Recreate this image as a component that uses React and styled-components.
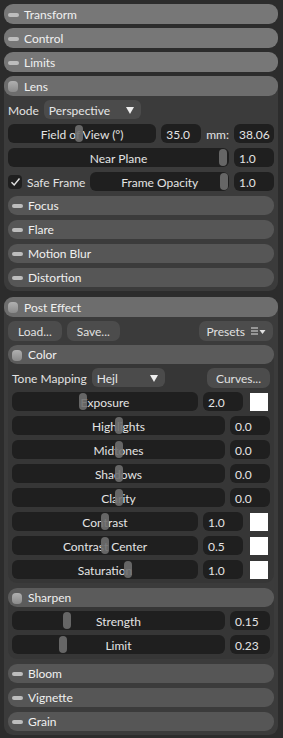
import React from 'react';
import styled, { createGlobalStyle } from 'styled-components';

const GlobalStyle = createGlobalStyle`
  html, body {
    margin: 0;
    padding: 0;
    background: #2c2c2c;
  }
  body {
    font-family: Lato, "Noto Sans", "Liberation Sans", sans-serif;
    font-size: 12px;
    color: #e6e6e6;
  }
`;

const Page = styled.div`
  width: 283px;
  height: 738px;
  box-sizing: border-box;
  padding: 4px 5px 0 4px;
  display: flex;
  flex-direction: column;
  gap: 4px;
  overflow: hidden;
`;

const Header = styled.div`
  height: ${({ $sub }) => ($sub ? 19 : 20)}px;
  box-sizing: border-box;
  padding: 1px 0 0 4px;
  flex-shrink: 0;
  display: flex;
  align-items: center;
  gap: 5px;
  border-radius: 9px;
  background: ${({ $sub, $open }) =>
    $sub ? ($open ? '#5b5b5b' : '#565656') : $open ? '#6d6d6d' : '#777777'};
  color: #f0f0f0;
  line-height: 1;
`;

const Collapsed = styled.span`
  width: 11px;
  height: 4px;
  border-radius: 2px;
  background: #bdbdbd;
`;

const Expanded = styled.span`
  width: 10px;
  height: 11px;
  margin-right: 1px;
  border-radius: 4px;
  background: linear-gradient(#b0b0b0, #8a8a8a);
`;

const Panel = styled.div`
  display: flex;
  flex-direction: column;
  border-radius: 9px;
  background: ${({ $sub }) => ($sub ? '#363636' : '#3b3b3b')};
  flex-shrink: 0;
  margin-top: ${({ $mt }) => $mt || 0}px;
`;

const Body = styled.div`
  display: flex;
  flex-direction: column;
  gap: 5px;
  padding: 4px 4px ${({ $pb }) => $pb || 4}px 4px;
`;

const Row = styled.div`
  height: 19px;
  display: flex;
  align-items: center;
  gap: 5px;
  flex-shrink: 0;
`;

const Label = styled.span`
  color: #e2e2e2;
  white-space: nowrap;
  padding-top: 1px;
`;

const Dropdown = styled.div`
  width: ${({ $w }) => $w}px;
  height: 19px;
  box-sizing: border-box;
  display: flex;
  align-items: center;
  justify-content: space-between;
  padding: 1px 7px 0 5px;
  border-radius: 6px;
  background: #4b4b4b;
  color: #e6e6e6;
  &::after {
    content: '';
    border-left: 4.5px solid transparent;
    border-right: 4.5px solid transparent;
    border-top: 7px solid #eeeeee;
  }
`;

const Button = styled.div`
  height: 20px;
  box-sizing: border-box;
  padding: 1px ${({ $px }) => $px || 9}px 0;
  display: flex;
  align-items: center;
  gap: 6px;
  border-radius: 7px;
  background: #4c4c4c;
  color: #e0e0e0;
  margin-left: ${({ $right }) => ($right ? 'auto' : '0')};
  margin-right: ${({ $mr }) => $mr || 0}px;
`;

const Track = styled.div`
  position: relative;
  flex: 1;
  height: 19px;
  box-sizing: border-box;
  padding-top: 1px;
  border-radius: 6px;
  background: #1f1f1f;
  display: flex;
  align-items: center;
  justify-content: center;
  color: #e4e4e4;
`;

const Thumb = styled.span`
  position: absolute;
  top: 1px;
  width: 8px;
  height: 17px;
  margin-left: -4px;
  border-radius: 4px;
  background: #6e6e6e;
  opacity: 0.9;
`;

const TrackText = styled.span`
  position: relative;
`;

const Value = styled.div`
  width: 40px;
  height: 19px;
  box-sizing: border-box;
  padding: 1px 0 0 5px;
  border-radius: 6px;
  background: #1f1f1f;
  display: flex;
  align-items: center;
  color: #e4e4e4;
  flex-shrink: 0;
`;

const Swatch = styled.div`
  width: 18px;
  height: 18px;
  background: #ffffff;
  margin-left: 2px;
  margin-right: 2px;
  flex-shrink: 0;
`;

const Check = styled.div`
  width: 14px;
  height: 14px;
  border-radius: 4px;
  background: #1f1f1f;
  display: flex;
  align-items: center;
  justify-content: center;
  flex-shrink: 0;
`;

function Head({ title, open, sub }) {
  return (
    <Header $sub={sub} $open={open}>
      {open ? <Expanded /> : <Collapsed />}
      <span>{title}</span>
    </Header>
  );
}

function Slider({ label, pos }) {
  return (
    <Track>
      <TrackText>{label}</TrackText>
      <Thumb style={{ left: `${pos}%` }} />
    </Track>
  );
}

function ColorRow({ label, pos, value, swatch }) {
  return (
    <Row>
      <Slider label={label} pos={pos} />
      <Value>{value}</Value>
      {swatch && <Swatch />}
    </Row>
  );
}

const colorRows = [
  { label: 'Exposure', pos: 38, value: '2.0', swatch: true },
  { label: 'Highlights', pos: 50, value: '0.0' },
  { label: 'Midtones', pos: 50, value: '0.0' },
  { label: 'Shadows', pos: 50, value: '0.0' },
  { label: 'Clarity', pos: 50, value: '0.0' },
  { label: 'Contrast', pos: 50, value: '1.0', swatch: true },
  { label: 'Contrast Center', pos: 50, value: '0.5', swatch: true },
  { label: 'Saturation', pos: 62.5, value: '1.0', swatch: true },
];

export default function App() {
  return (
    <>
      <GlobalStyle />
      <Page>
        <Head title="Transform" />
        <Head title="Control" />
        <Head title="Limits" />

        <Panel>
          <Head title="Lens" open />
          <Body $pb={4}>
            <Row>
              <Label>Mode</Label>
              <Dropdown $w={97}>Perspective</Dropdown>
            </Row>
            <Row>
              <Slider label="Field of View (°)" pos={48} />
              <Value>35.0</Value>
              <Label>mm:</Label>
              <Value>38.06</Value>
            </Row>
            <Row>
              <Slider label="Near Plane" pos={97.5} />
              <Value>1.0</Value>
            </Row>
            <Row>
              <Check>
                <svg width="11" height="10" viewBox="0 0 11 10">
                  <path d="M1.5 5.2 L4.2 8 L9.5 1.5" fill="none" stroke="#e0e0e0" strokeWidth="1.4" />
                </svg>
              </Check>
              <Label>Safe Frame</Label>
              <Slider label="Frame Opacity" pos={96.5} />
              <Value>1.0</Value>
            </Row>
            <Head title="Focus" sub />
            <Head title="Flare" sub />
            <Head title="Motion Blur" sub />
            <Head title="Distortion" sub />
          </Body>
        </Panel>

        <Panel $mt={2}>
          <Head title="Post Effect" open />
          <Body>
            <Row>
              <Button $px={10}>Load...</Button>
              <Button $px={10}>Save...</Button>
              <Button $right $mr={1} $px={7}>
                Presets
                <svg width="15" height="9" viewBox="0 0 15 9">
                  <path d="M0 1h7M0 4h7M0 7h7" stroke="#e0e0e0" strokeWidth="1.2" />
                  <path d="M8.5 3h6l-3 4z" fill="#e0e0e0" />
                </svg>
              </Button>
            </Row>

            <Panel $sub>
              <Head title="Color" sub open />
              <Body>
                <Row>
                  <Label>Tone Mapping</Label>
                  <Dropdown $w={73}>Hejl</Dropdown>
                  <Button $right>Curves...</Button>
                </Row>
                {colorRows.map((r) => (
                  <ColorRow key={r.label} {...r} />
                ))}
              </Body>
            </Panel>

            <Panel $sub>
              <Head title="Sharpen" sub open />
              <Body $pb={5}>
                <Row>
                  <Slider label="Strength" pos={26} />
                  <Value>0.15</Value>
                </Row>
                <Row>
                  <Slider label="Limit" pos={24} />
                  <Value>0.23</Value>
                </Row>
              </Body>
            </Panel>

            <Head title="Bloom" sub />
            <Head title="Vignette" sub />
            <Head title="Grain" sub />
          </Body>
        </Panel>
      </Page>
    </>
  );
}
